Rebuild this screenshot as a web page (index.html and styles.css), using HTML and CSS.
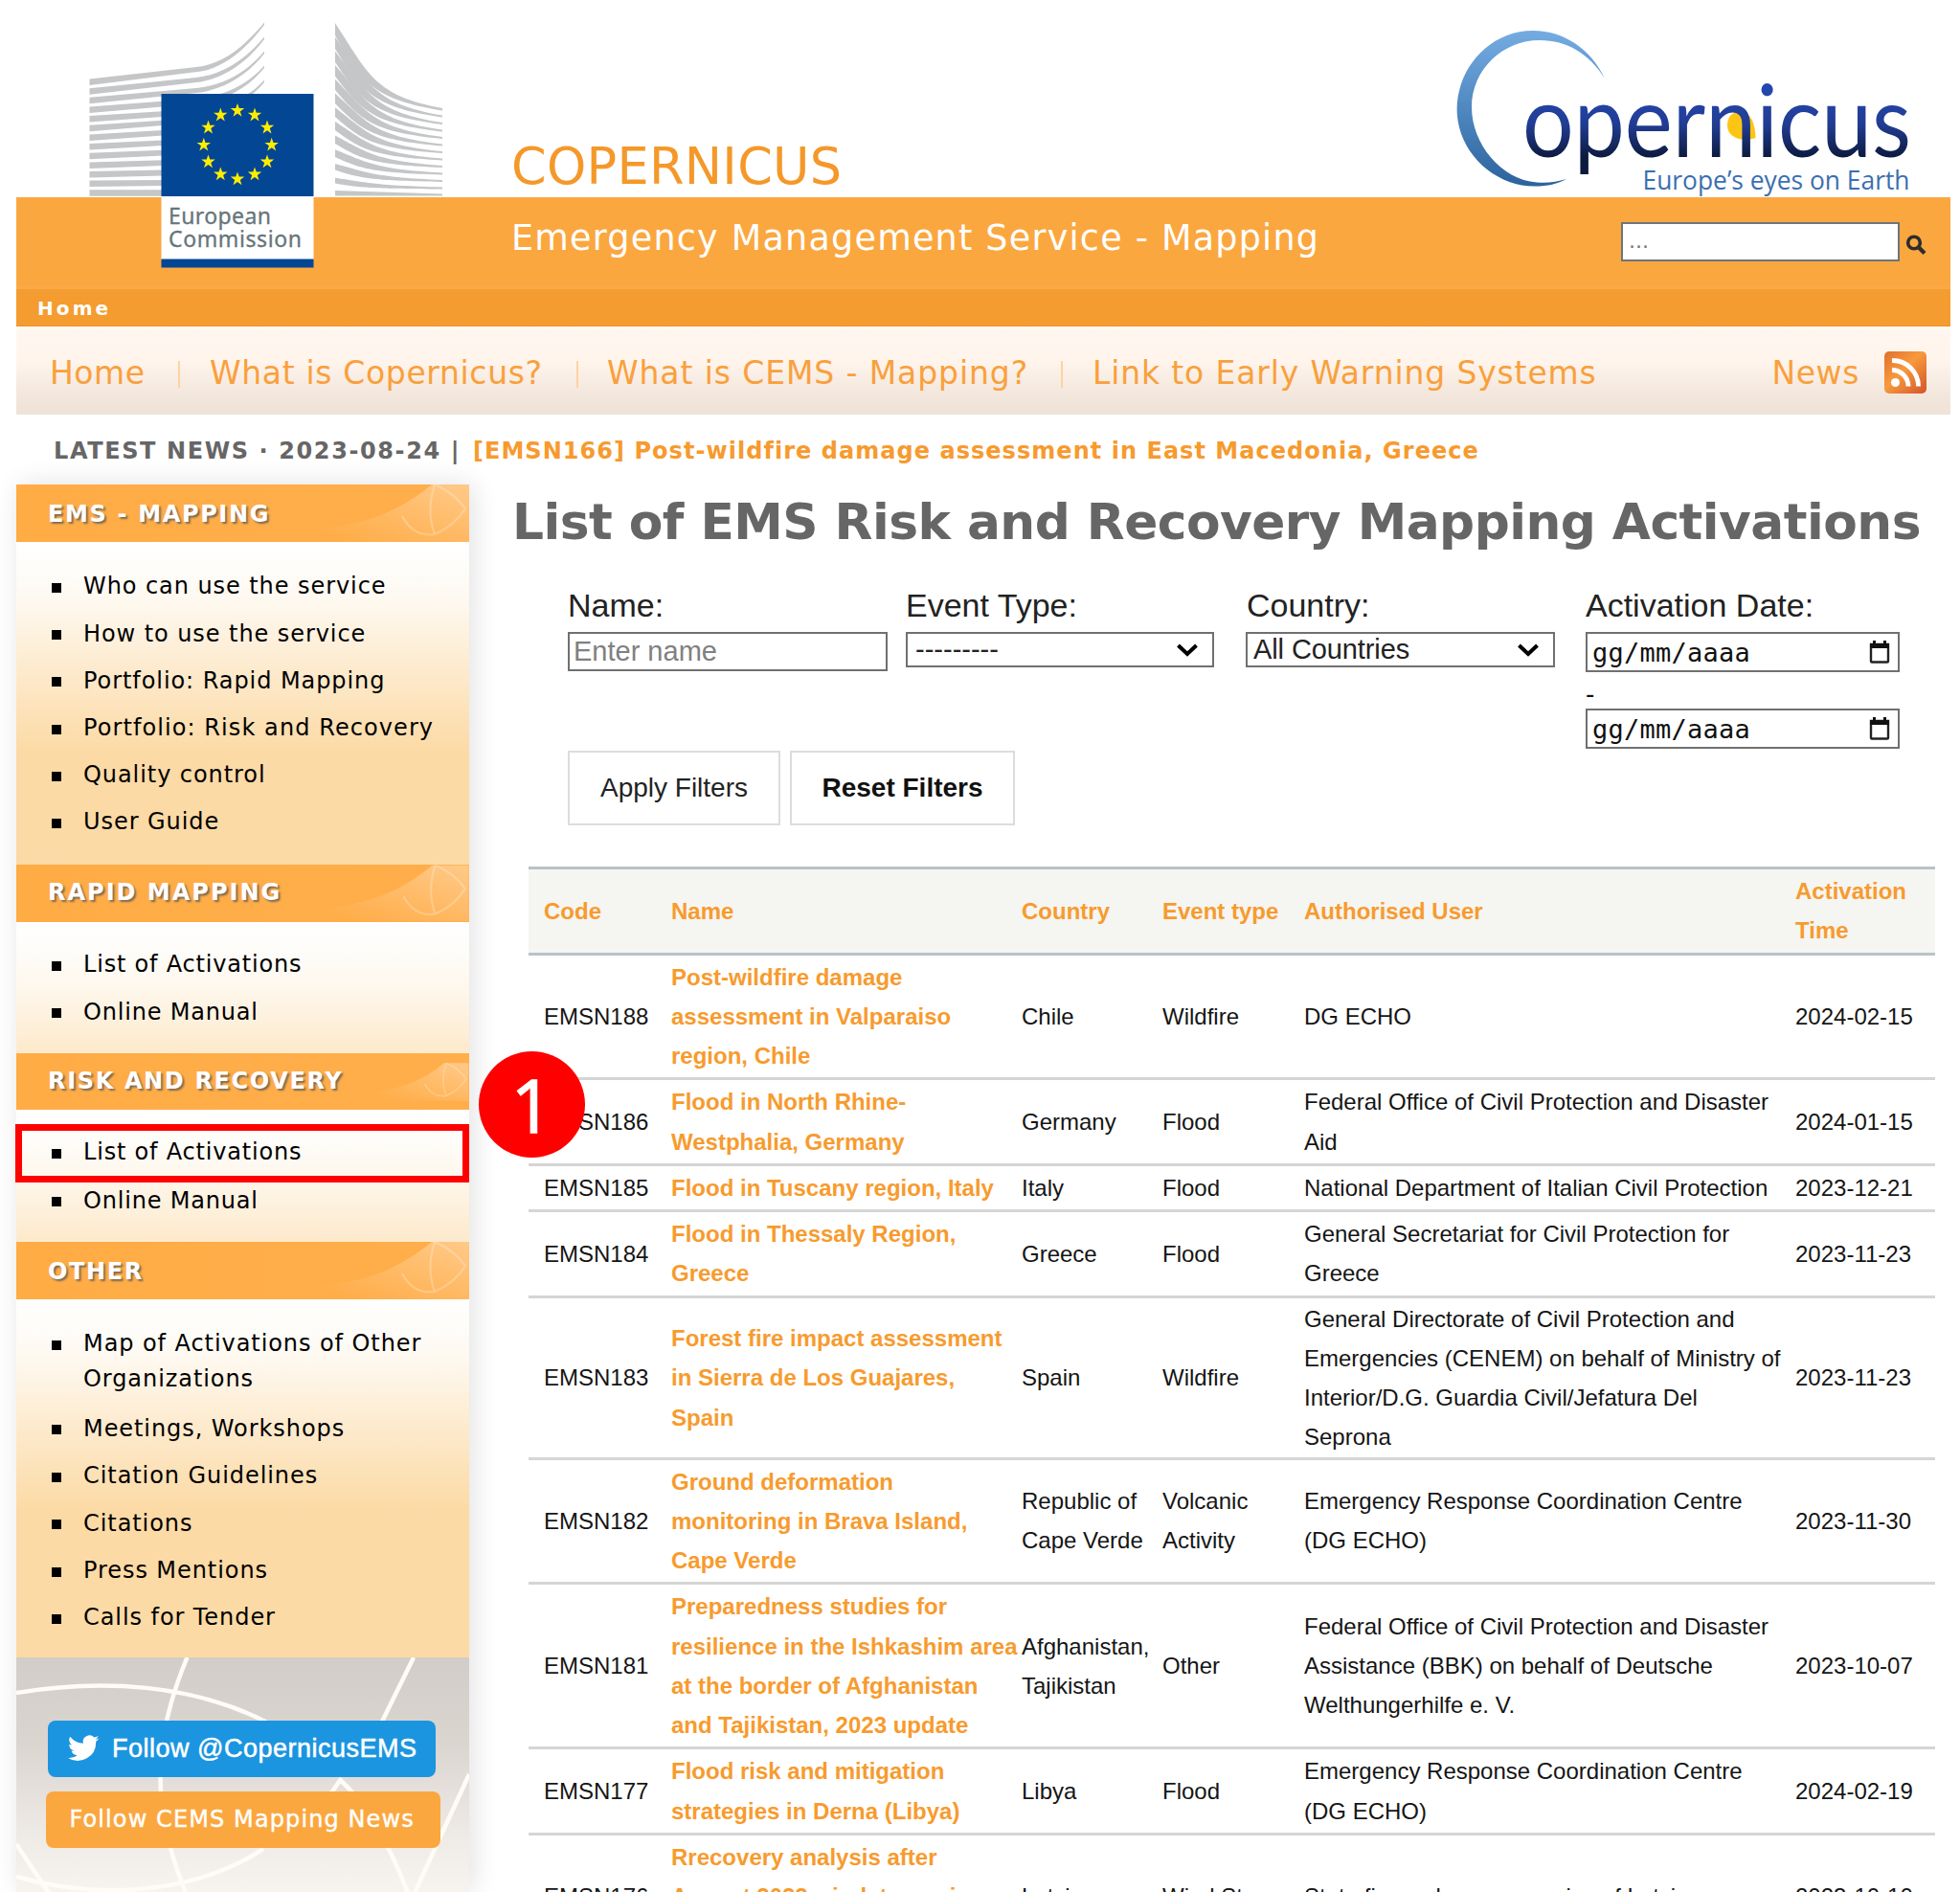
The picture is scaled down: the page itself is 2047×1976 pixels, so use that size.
FILE: index.html
```html
<!DOCTYPE html>
<html lang="en">
<head>
<meta charset="utf-8">
<title>Copernicus EMS - Mapping</title>
<link rel="stylesheet" href="styles.css">
</head>
<body>
<svg width="0" height="0" class="defs">
  <defs>
    <linearGradient id="word" gradientUnits="userSpaceOnUse" x1="0" y1="96" x2="0" y2="172">
      <stop offset="0" stop-color="#2446ae"/><stop offset=".45" stop-color="#213c92"/><stop offset=".9" stop-color="#0c1a3e"/>
    </linearGradient>
    <linearGradient id="arc" x1="0" y1="0" x2="0" y2="1">
      <stop offset="0" stop-color="#74ace2"/><stop offset="1" stop-color="#2c639e"/>
    </linearGradient>
    <linearGradient id="rss" x1="0" y1="0" x2="1" y2="1">
      <stop offset="0" stop-color="#e0702f"/><stop offset=".45" stop-color="#f79a3c"/><stop offset="1" stop-color="#d4532a"/>
    </linearGradient>
    <linearGradient id="swoosh" x1="0" y1="1" x2="1" y2="0">
      <stop offset=".2" stop-color="#fff" stop-opacity="0"/><stop offset="1" stop-color="#fff" stop-opacity=".34"/>
    </linearGradient>
    <path id="star" fill="#ffed00" d="M0-7.6 1.75-2.4H7.2L2.8.9 4.5 6.2 0 3-4.5 6.2-2.8.9-7.2-2.4H-1.75Z"/>
    <symbol id="globe" viewBox="0 0 200 60">
      <path fill="url(#swoosh)" d="M20 48C90 44 124 30 161 0H200V60H0Z"/>
      <g fill="none" stroke="#fff" stroke-width="2.2" opacity=".24">
        <path d="M164 0C158 18 158 36 164 52M164 0C178 6 188 14 196 25C188 38 178 46 164 52C150 54 138 48 130 33"/>
      </g>
    </symbol>
    <symbol id="chev" viewBox="0 0 24 16"><path d="M2.500 3 12 12 21.500 3" fill="none" stroke="#000" stroke-width="4"/></symbol>
    <symbol id="cal" viewBox="0 0 22 24"><path d="M2 4H20V21.500Q20 22.500 19 22.500H3Q2 22.500 2 21.500Z" fill="none" stroke="#222" stroke-width="2.400"/><path d="M1 3H4V0H7V3H15V0H18V3H21V8H1Z" fill="#111"/></symbol>
  </defs>
</svg>

<div class="page">
  <header class="banner">
    <svg class="ec-logo" width="380" height="290" viewBox="90 0 380 290">
      <g fill="#c4c6c8">
        <path d="M93.500 82.500L205 70C235 67 258 45 276 23.500V26C258 50 235 70 210 74.500L93.500 89Z"/>
        <path d="M93.500 92.200L205 81C235 78 258 60 276 38.500V41C258 65 235 81 210 85.500L93.500 98.700Z"/>
        <path d="M93.500 101.800L205 92C235 89 258 75 276 53.500V56C258 79 235 92 210 96.500L93.500 108.300Z"/>
        <path d="M93.500 111.500L205 103C235 100 258 89 276 68.500V71C258 93 235 104 210 108L93.500 118Z"/>
        <path d="M93.500 121.100L205 114C235 111 258 104 276 83.500V86C258 108 235 115 210 119L93.500 127.600Z"/>
        <path d="M93.500 130.800L170 125.800V131L93.500 137.300ZM93.500 140.400L170 136.100V141.500L93.500 146.900ZM93.500 150L170 146.500V152L93.500 156.500ZM93.500 159.700L170 156.800V162.500L93.500 166.200ZM93.500 169.400L170 167.300V173L93.500 175.900ZM93.500 179L170 177.600V183.500L93.500 185.500ZM93.500 188.600L170 187.900V194L93.500 195.100ZM93.500 198.300H170V204.800H93.500Z"/>
        <path d="M350 24C385 78 392 100 462 113V115.500C392 104 378 88 350 37Z"/>
        <path d="M350 38.700C385 88.300 392 108.500 462 120.500V122.500C392 112.500 378 97 350 51Z"/>
        <path d="M350 53.400C385 98.500 392 117 462 128V130C392 121 378 107 350 65Z"/>
        <path d="M350 68C385 108.800 392 125.500 462 135.500V137.500C392 129.500 378 117 350 79.500Z"/>
        <path d="M350 82.800C385 119 392 134 462 143V145C392 138 378 127 350 94Z"/>
        <path d="M350 97.500C385 129.300 392 142.500 462 150.500V152.500C392 146.500 378 137 350 108Z"/>
        <path d="M350 112.200C385 139.500 392 151 462 158V160C392 155 378 147 350 122Z"/>
        <path d="M350 126.900C385 149.800 392 159.500 462 165.500V167.500C392 163.500 378 157 350 136Z"/>
        <path d="M350 141.600C385 160 392 168 462 173V175C392 172 378 167 350 150Z"/>
        <path d="M350 156.300C385 170.300 392 176.500 462 180.500V182.500C392 180.500 378 177 350 164Z"/>
        <path d="M350 171C385 180.500 392 185 462 188V190C392 188.500 378 187 350 177.500Z"/>
        <path d="M350 185.700C385 190.800 392 193.500 462 195.500V197.500C392 197 378 196.500 350 191.500Z"/>
        <path d="M350 199L462 202.500V204.500H350Z"/>
      </g>
      <rect x="168.500" y="98" width="159" height="107" fill="#034694"/>
      <rect x="168.500" y="205" width="159" height="66" fill="#fff"/>
      <rect x="168.500" y="270.500" width="159" height="9" fill="#034694"/>
      <use href="#star" x="248" y="115.500"/><use href="#star" x="266" y="120.200"/><use href="#star" x="279" y="133.200"/>
      <use href="#star" x="283.700" y="151.300"/><use href="#star" x="279" y="169"/><use href="#star" x="266" y="182"/>
      <use href="#star" x="248" y="187"/><use href="#star" x="230.300" y="182"/><use href="#star" x="217.500" y="169"/>
      <use href="#star" x="212.800" y="151.300"/><use href="#star" x="217.500" y="133.200"/><use href="#star" x="230.300" y="120.200"/>
      <g class="ec-text"><text x="176" y="234" textLength="107">European</text><text x="176" y="258" textLength="139">Commission</text></g>
    </svg>
    <div class="titles">
      <div class="brand">COPERNICUS</div>
      <div class="service">Emergency Management Service - Mapping</div>
    </div>
    <div class="right">
      <svg class="cop-logo" width="480" height="206" viewBox="1515 0 480 206">
        <path fill="url(#arc)" d="M1676 82C1662 52 1634 32 1601 32C1555 32 1521.600 72 1521.600 114C1521.600 158 1560 194.500 1603 194.500C1616 194.500 1627 192 1636 187C1626 190 1616 191.500 1605 190.500C1568 188 1537 150 1537 112C1537 72 1570 42 1608 42C1636 42 1660 56 1676 82Z"/>
        <path fill="#fdc513" d="M1804 131C1804 121 1810 116.500 1818 116.500C1828 117 1833 128 1833.500 144C1818 149 1804 143 1804 131Z"/>
        <text class="word" x="1590" y="164" textLength="406" lengthAdjust="spacingAndGlyphs" fill="url(#word)">opernicus</text>
        <text class="motto" x="1715.500" y="197.500" textLength="279" lengthAdjust="spacingAndGlyphs">Europe’s eyes on Earth</text>
      </svg>
      <div class="search">
        <div class="search-box">...</div>
        <svg width="24" height="24" viewBox="0 0 24 24"><circle cx="10" cy="10.500" r="6.300" fill="none" stroke="#2d2d2d" stroke-width="3.600"/><path d="M14.500 15 21 21.500" stroke="#2d2d2d" stroke-width="4.200"/></svg>
      </div>
    </div>
  </header>
  <div class="crumbs">Home</div>
  <nav class="nav">
    <a class="n1">Home</a><i></i><a class="n2">What is Copernicus?</a><i></i><a class="n3">What is CEMS - Mapping?</a><i></i><a class="n4">Link to Early Warning Systems</a>
    <a class="news">News</a>
    <svg width="44" height="44" viewBox="0 0 44 44"><rect width="44" height="44" rx="5" fill="url(#rss)"/><circle cx="11.500" cy="32.500" r="4.500" fill="#fff"/><path d="M8 19.500A17 17 0 0 1 25 36.500M8 9.500A27 27 0 0 1 35.500 36.500" fill="none" stroke="#fff" stroke-width="4.800"/></svg>
  </nav>
  <div class="latest"><span class="l1">LATEST NEWS · 2023-08-24 |</span><a class="l2">[EMSN166] Post-wildfire damage assessment in East Macedonia, Greece</a></div>

  <div class="cols">
    <aside class="side">
      <h2 class="h-low"><span>EMS - MAPPING</span><svg width="200" height="60"><use href="#globe"/></svg></h2>
      <ul class="g1"><li>Who can use the service</li><li>How to use the service</li><li>Portfolio: Rapid Mapping</li><li class="wide">Portfolio: Risk and Recovery</li><li>Quality control</li><li>User Guide</li></ul>
      <h2 class="h-high"><span class="s2">RAPID MAPPING</span><svg width="200" height="60"><use href="#globe"/></svg></h2>
      <ul class="g2"><li>List of Activations</li><li>Online Manual</li></ul>
      <h2 class="h-high"><span>RISK AND RECOVERY</span><svg width="200" height="60"><use href="#globe"/></svg></h2>
      <ul class="g3"><li>List of Activations</li><li>Online Manual</li></ul>
      <h2 class="h-low"><span>OTHER</span><svg width="200" height="60"><use href="#globe"/></svg></h2>
      <ul class="g4"><li>Map of Activations of Other<br>Organizations</li><li>Meetings, Workshops</li><li>Citation Guidelines</li><li>Citations</li><li>Press Mentions</li><li>Calls for Tender</li></ul>
      <div class="follow">
        <svg class="lines" width="473" height="246" viewBox="0 0 473 246" fill="none" stroke="#fffcf7" stroke-width="4.500">
          <path d="M0 37C90 22 185 28 262 68M0 229C90 255 190 245 258 200M178.500 0C145 80 138 150 177 246M415 0 382 67M325 147 338.500 128 Q378 165 409 246M473 122 416 246M0 195 34 246"/>
        </svg>
        <a class="tw"><svg width="33" height="28" viewBox="0 0 24 20"><path fill="#fff" d="M23.600 2.400a9.700 9.700 0 0 1-2.800.8A4.900 4.900 0 0 0 23 .5a9.700 9.700 0 0 1-3.100 1.200 4.850 4.850 0 0 0-8.300 4.400A13.800 13.800 0 0 1 1.600 1 4.850 4.850 0 0 0 3.100 7.500a4.800 4.800 0 0 1-2.200-.6A4.900 4.900 0 0 0 4.800 11.700a4.900 4.900 0 0 1-2.200.1 4.900 4.900 0 0 0 4.500 3.400A9.800 9.800 0 0 1 0 17.200 13.800 13.800 0 0 0 21.200 4.900a9.900 9.900 0 0 0 2.400-2.500z"/></svg><span>Follow @CopernicusEMS</span></a>
        <a class="fn">Follow CEMS Mapping News</a>
      </div>
      <div class="mark"></div>
    </aside>

    <main class="main">
      <h1>List of EMS Risk and Recovery Mapping Activations</h1>
      <div class="filters">
        <div><label>Name:</label><div class="box name">Enter name</div></div>
        <div><label>Event Type:</label><div class="box sel"><span>---------</span><svg width="24" height="16"><use href="#chev"/></svg></div></div>
        <div><label>Country:</label><div class="box sel country"><span>All Countries</span><svg width="24" height="16"><use href="#chev"/></svg></div></div>
        <div><label>Activation Date:</label><div class="box date"><span>gg/mm/aaaa</span><svg width="22" height="24"><use href="#cal"/></svg></div><div class="dash">-</div><div class="box date"><span>gg/mm/aaaa</span><svg width="22" height="24"><use href="#cal"/></svg></div></div>
      </div>
      <div class="buttons"><a class="b1">Apply Filters</a><a class="b2">Reset Filters</a></div>
      <table>
        <colgroup><col class="c1"><col class="c2"><col class="c3"><col class="c4"><col class="c5"><col class="c6"></colgroup>
        <thead><tr><th>Code</th><th>Name</th><th>Country</th><th>Event type</th><th>Authorised User</th><th>Activation<br>Time</th></tr></thead>
        <tbody>
          <tr><td>EMSN188</td><td>Post-wildfire damage<br>assessment in Valparaiso<br>region, Chile</td><td>Chile</td><td>Wildfire</td><td>DG ECHO</td><td>2024-02-15</td></tr>
          <tr><td>EMSN186</td><td>Flood in North Rhine-<br>Westphalia, Germany</td><td>Germany</td><td>Flood</td><td>Federal Office of Civil Protection and Disaster<br>Aid</td><td>2024-01-15</td></tr>
          <tr><td>EMSN185</td><td>Flood in Tuscany region, Italy</td><td>Italy</td><td>Flood</td><td>National Department of Italian Civil Protection</td><td>2023-12-21</td></tr>
          <tr><td>EMSN184</td><td>Flood in Thessaly Region,<br>Greece</td><td>Greece</td><td>Flood</td><td>General Secretariat for Civil Protection for<br>Greece</td><td>2023-11-23</td></tr>
          <tr class="tall"><td>EMSN183</td><td>Forest fire impact assessment<br>in Sierra de Los Guajares,<br>Spain</td><td>Spain</td><td>Wildfire</td><td>General Directorate of Civil Protection and<br>Emergencies (CENEM) on behalf of Ministry of<br>Interior/D.G. Guardia Civil/Jefatura Del<br>Seprona</td><td>2023-11-23</td></tr>
          <tr><td>EMSN182</td><td>Ground deformation<br>monitoring in Brava Island,<br>Cape Verde</td><td>Republic of<br>Cape Verde</td><td>Volcanic<br>Activity</td><td>Emergency Response Coordination Centre<br>(DG ECHO)</td><td>2023-11-30</td></tr>
          <tr><td>EMSN181</td><td>Preparedness studies for<br>resilience in the Ishkashim area<br>at the border of Afghanistan<br>and Tajikistan, 2023 update</td><td>Afghanistan,<br>Tajikistan</td><td>Other</td><td>Federal Office of Civil Protection and Disaster<br>Assistance (BBK) on behalf of Deutsche<br>Welthungerhilfe e. V.</td><td>2023-10-07</td></tr>
          <tr><td>EMSN177</td><td>Flood risk and mitigation<br>strategies in Derna (Libya)</td><td>Libya</td><td>Flood</td><td>Emergency Response Coordination Centre<br>(DG ECHO)</td><td>2024-02-19</td></tr>
          <tr><td>EMSN176</td><td>Rrecovery analysis after<br>August 2022 windstorms in<br>Latvia</td><td>Latvia</td><td>Wind Storm</td><td>State fire and rescue service of Latvia</td><td>2023-10-10</td></tr>
        </tbody>
      </table>
    </main>
    <div class="step">1</div>
  </div>
</div>
</body>
</html>
```
FILE: styles.css
```css
* { box-sizing: border-box; }
body { margin: 0; background: #fff; height: 1976px; overflow: hidden; font-family: "DejaVu Sans", Verdana, sans-serif; color: #111; }
.defs { position: absolute; }
.page { width: 2020px; margin-left: 17px; height: 1976px; overflow: visible; }

.banner { display: flex; height: 302px; background: linear-gradient(#fff 206px, #fba740 206px, #fba740 298px, #faa947 299px); }
.ec-logo { margin-left: 73px; flex: none; }
.ec-text { font: 23px "Noto Sans", sans-serif; fill: #66757a; stroke: #66757a; stroke-width: .3px; }
.titles { margin-left: 64px; white-space: nowrap; }
.brand { margin-top: 144px; height: 60px; line-height: 60px; font-size: 52.500px; letter-spacing: .3px; color: #f5982a; }
.service { line-height: 89px; height: 89px; font-size: 36.500px; letter-spacing: 1.230px; color: #fff; }
.right { margin-left: auto; width: 522px; }
.cop-logo { display: block; overflow: visible; }
.word { font: 104px Lato, sans-serif; }
.motto { font: 28px "Open Sans", sans-serif; fill: #3b6fb0; }
.search { display: flex; align-items: center; margin: 26px 0 0 178px; gap: 5px; }
.search svg { margin-top: 4px; }
.search-box { width: 291px; height: 41px; border: 2px solid #6d747b; background: #fff; padding-left: 6px; line-height: 36px; font-size: 22px; color: #777; }

.crumbs { height: 39px; background: #f49c2f; border-bottom: 1px solid #f29222; padding-left: 22px; line-height: 41px; font-size: 20px; font-weight: bold; letter-spacing: 3.100px; color: #fff; }
.nav { height: 92px; display: flex; align-items: center; padding: 5px 25px 0 35px; background: linear-gradient(#fff 0, #fff6ef 3px, #fff5ed 35px, #f3e7dd 70px, #efe3d8 91px); font-size: 33px; color: #f9a03c; white-space: nowrap; }
.nav i { width: 2px; height: 28px; background: #fdd3a0; margin-top: 2px; }
.nav svg { margin: -1px 0 0 26px; }
.n1 { width: 134px; letter-spacing: .5px; }
.n2 { margin-left: 31px; width: 383px; letter-spacing: .650px; }
.n3 { margin-left: 30px; width: 474px; letter-spacing: .900px; }
.n4 { margin-left: 31px; letter-spacing: .850px; }
.news { margin-left: auto; letter-spacing: .6px; }
.latest { height: 73px; line-height: 76px; padding-left: 39px; font-size: 24px; font-weight: bold; white-space: nowrap; color: #666; display: flex; }
.l1 { width: 438px; letter-spacing: 1.600px; }
.l2 { letter-spacing: 1.040px; color: #f79a2e; }

.cols { display: flex; position: relative; height: 1469px; }
.side { width: 473px; flex: none; box-shadow: 4px 0 26px rgba(0,0,0,.12); position: relative; }
h2 { margin: 0; height: 59.500px; background: linear-gradient(90deg, #ffac45, #ffae4b); display: flex; justify-content: space-between; overflow: hidden; padding-left: 33px; font-size: 24px; line-height: 61px; letter-spacing: 1.650px; color: #fff; text-shadow: 2px 2px 2px #7d6a52; white-space: nowrap; }
.h-low { line-height: 63px; }
.h-high { line-height: 59px; }
.s2 { letter-spacing: 2px; }
ul { margin: 0; padding: 20px 0 0 70px; list-style: none; font-size: 24px; letter-spacing: .930px; line-height: 36.400px; color: #000; background: #fcdaa5 linear-gradient(#fff, #fefcf8 35px, #fef8ee 65px, #fdebcf 130px, #fcdaa5 220px) no-repeat 0 0 / 100% 220px; }
li { position: relative; padding: 6.400px 0; white-space: nowrap; }
li::before { content: ""; position: absolute; left: -33px; top: 21px; width: 10px; height: 10px; background: #000; }
.wide { letter-spacing: 1.080px; }
.g1 { height: 337.500px; padding-top: 22.500px; }
.g2 { height: 137px; letter-spacing: .800px; padding-top: 20.500px; }
.g3 { height: 138px; letter-spacing: .800px; }
.g3 li + li { top: 1px; }
.g4 { height: 374px; padding-top: 22px; }
.g4 li { padding-bottom: 6.600px; }
.g4 li:first-child { line-height: 37px; padding-bottom: 8.500px; }
.follow { height: 245px; position: relative; background: linear-gradient(#d3cdc9, #dbd5d0 90px, #efebe6 190px, #f7f4ef); display: flex; flex-direction: column; align-items: flex-start; padding-top: 66px; white-space: nowrap; color: #fff; }
.lines { position: absolute; left: 0; top: 0; }
.tw, .fn { position: relative; display: flex; align-items: center; border-radius: 8px; }
.tw { margin-left: 33px; width: 405px; height: 59.500px; background: #1b95e0; padding-left: 21px; gap: 13px; font: 27px "Liberation Sans", Arial, sans-serif; letter-spacing: .500px; -webkit-text-stroke: .500px #fff; }
.fn { margin: 14.500px 0 0 30.500px; width: 412px; height: 59px; background: #fba73f; padding-left: 25px; font-size: 24px; letter-spacing: 1.100px; -webkit-text-stroke: .400px #fff; }
.mark { position: absolute; left: -1px; top: 668px; width: 474px; height: 61px; border: 7px solid #f00; }
.step { position: absolute; left: 483px; top: 592px; width: 111px; height: 111px; border-radius: 50%; background: #f00; color: #fff; font: 76px/112px "Open Sans", sans-serif; text-align: center; -webkit-text-stroke: 1.500px #fff; }

.main { padding-left: 45px; font-family: "Liberation Sans", Arial, sans-serif; }
h1 { margin: 0 0 27px -28px; padding-left: 28px; height: 78px; font: bold 51.800px/78px "DejaVu Sans", Verdana, sans-serif; letter-spacing: -.520px; color: #666; white-space: nowrap; }
.filters { display: grid; grid-template-columns: 353px 356px 354px 330px; margin-left: 58px; height: 172.500px; align-items: start; }
label { display: block; height: 49px; line-height: 42px; font-size: 34px; color: #222; white-space: nowrap; }
.box { border: 2px solid #707070; display: flex; align-items: center; justify-content: space-between; white-space: nowrap; font-size: 29px; }
.name { width: 334px; height: 41px; padding-left: 4px; color: #808080; line-height: 37px; }
.sel { width: 322px; height: 37px; padding: 0 14px 0 8px; color: #222; line-height: 30px; }
.sel span { margin-top: -2px; }
.country { padding-left: 6px; letter-spacing: -.1px; margin-left: -1px; width: 323px; }
.date { width: 328px; height: 42px; padding: 0 8px 0 5px; font: 27px "DejaVu Sans Mono", monospace; letter-spacing: .250px; color: #111; }
.dash { height: 38px; line-height: 45px; font-size: 28px; }
.buttons { display: flex; gap: 10px; margin-left: 58px; height: 121.500px; align-items: flex-start; font-size: 28px; }
.buttons a { height: 78px; border: 2px solid #dcdcdc; line-height: 74px; text-align: center; color: #222; }
.b1 { width: 222px; } .b2 { width: 235px; font-weight: bold; }
.buttons .b2 { color: #111; }
table { margin-left: 17px; width: 1469px; table-layout: fixed; border-collapse: separate; border-spacing: 0; font-size: 24px; line-height: 41.250px; white-space: nowrap; color: #151515; }
.c1 { width: 133px; } .c2 { width: 366px; } .c3 { width: 147px; } .c4 { width: 148px; } .c5 { width: 513px; } .c6 { width: 162px; }
th, td { padding: 2px 0 2px 16px; text-align: left; vertical-align: middle; border-bottom: 3px solid #d5d5d5; }
th { background: #f5f5f2; border-top: 3px solid #b9c2c8; border-bottom: 3px solid #b9c2c8; color: #f79b2e; }
td:nth-child(2) { font-weight: bold; color: #f79b2e; }
.tall td { padding: 1px 0 0 16px; }
```
